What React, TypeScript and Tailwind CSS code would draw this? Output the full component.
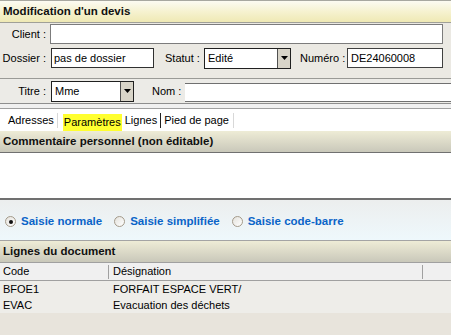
import React from "react";

function Header({ children, variant }: { children: React.ReactNode; variant: "yellow" | "gray" }) {
  const bg =
    variant === "yellow"
      ? "bg-linear-to-b from-[#fcfbf2] via-[#f6f2d0] to-[#efe9b4]"
      : "bg-linear-to-b from-[#eeecd6] via-[#dcdac8] to-[#c9c8ba]";
  return (
    <div className={`h-[21px] shrink-0 flex items-center px-[3px] font-bold text-[11.5px] text-[#101010] whitespace-nowrap ${bg}`}>
      {children}
    </div>
  );
}

function Select({ value, w }: { value: string; w: string }) {
  return (
    <div className={`${w} h-[21px] bg-white border border-[#202020] flex items-stretch`}>
      <div className="flex-1 flex items-center pl-[3px]">{value}</div>
      <div className="w-[13px] bg-[#d8d4c8] border-l border-[#505050] flex items-center justify-center">
        <svg width="7" height="4" viewBox="0 0 7 4">
          <path d="M0 0h7L3.5 4z" fill="#000" />
        </svg>
      </div>
    </div>
  );
}

function Radio({ checked }: { checked?: boolean }) {
  return (
    <div className="w-[11px] h-[11px] rounded-full border border-[#a49a8a] bg-linear-to-br from-[#e4e2dc] to-[#ffffff] flex items-center justify-center">
      {checked && <div className="w-[4px] h-[4px] rounded-full bg-[#101010]" />}
    </div>
  );
}

export default function App() {
  return (
    <div className="w-[451px] h-[335px] overflow-hidden bg-[#e8e4dc] text-[11px] text-black flex flex-col font-['Liberation_Sans',Arial,sans-serif] leading-none whitespace-nowrap">
      {/* Header */}
      <div className="border-t border-[#a8a8a0]" />
      <Header variant="yellow">Modification d'un devis</Header>
      <div className="border-t border-[#a0a098]" />

      {/* Section 1 */}
      <div className="h-[56px] shrink-0 bg-[#ebe9e3] border-b border-[#9a9a96] flex flex-col">
        <div className="flex items-center mt-[1px] h-[20px]">
          <div className="w-[47px] text-right pr-[1px]">Client :</div>
          <div className="ml-[3px] w-[393px] h-[20px] bg-white border border-[#7c7c7c]" />
        </div>
        <div className="flex items-center mt-[4px] h-[20px]">
          <div className="w-[47px] text-right pr-[1px]">Dossier :</div>
          <div className="ml-[4px] w-[103px] h-[20px] bg-white border border-[#303030] flex items-center pl-[2px]">pas de dossier</div>
          <div className="ml-[11px] w-[37px]">Statut :</div>
          <div className="ml-[2px]">
            <Select value="Edité" w="w-[87px]" />
          </div>
          <div className="ml-[9px] w-[46px]">Numéro :</div>
          <div className="ml-[1px] w-[96px] h-[20px] bg-white border border-[#404040] flex items-center pl-[3px]">DE24060008</div>
        </div>
      </div>

      {/* Section 2 */}
      <div className="h-[25px] shrink-0 bg-[#ecebe7] border-b border-[#8e8e8e] flex items-center">
        <div className="w-[47px] text-right pr-[1px]">Titre :</div>
        <div className="ml-[4px]">
          <Select value="Mme" w="w-[83px]" />
        </div>
        <div className="ml-[18px] w-[33px]">Nom :</div>
        <div className="flex-1 h-[19px] mt-[2px] bg-white border-t border-b border-[#707070]" />
      </div>
      <div className="h-[5px] shrink-0 bg-[#f0f0f0] border-b border-[#a0a0a0]" />

      {/* Tabs */}
      <div className="h-[22px] shrink-0 bg-white flex items-center">
        <div className="ml-[8px]">Adresses</div>
        <div className="ml-[3px] w-px h-[15px] bg-[#d8d8d8]" />
        <div className="ml-[5px] h-[17px] mt-[5px] px-[1px] bg-[#ffff30] flex items-center pb-[1px]">Paramètres</div>
        <div className="ml-[3px]">Lignes</div>
        <div className="ml-[3px] w-px h-[15px] bg-[#202020]" />
        <div className="ml-[3px]">Pied de page</div>
        <div className="ml-[4px] w-px h-[15px] bg-[#d8d8d8]" />
      </div>

      {/* Commentaire */}
      <Header variant="gray">Commentaire personnel (non éditable)</Header>
      <div className="h-[48px] shrink-0 bg-white border-t border-b-2 border-[#707070]" />

      {/* Radios */}
      <div className="h-[41px] shrink-0 pt-[3px] bg-linear-to-b from-[#eceeee] to-[#eef8fc] border-b border-[#a4a4a4] flex items-center font-bold text-[11.5px] text-[#0a64c8]">
        <div className="ml-[5px]"><Radio checked /></div>
        <div className="ml-[5px]">Saisie normale</div>
        <div className="ml-[12px]"><Radio /></div>
        <div className="ml-[5px]">Saisie simplifiée</div>
        <div className="ml-[12px]"><Radio /></div>
        <div className="ml-[5px]">Saisie code-barre</div>
      </div>

      {/* Lignes du document */}
      <Header variant="gray">Lignes du document</Header>
      <div className="border-t border-[#a0a0a0]" />
      <div className="h-[18px] shrink-0 bg-[#f0f0f0] border-b border-[#a0a0a0] flex items-center">
        <div className="w-[108px] pl-[3px]">Code</div>
        <div className="w-px h-[14px] bg-[#a0a0a0]" />
        <div className="w-[313px] pl-[4px]">Désignation</div>
        <div className="w-px h-[14px] bg-[#a0a0a0]" />
      </div>
      <div className="bg-[#eeede9] flex flex-col">
        <div className="h-[16px] flex items-center">
          <div className="w-[109px] pl-[3px]">BFOE1</div>
          <div className="pl-[4px]">FORFAIT ESPACE VERT/</div>
        </div>
        <div className="h-[16px] flex items-center">
          <div className="w-[109px] pl-[3px]">EVAC</div>
          <div className="pl-[4px]">Evacuation des déchets</div>
        </div>
      </div>
      <div className="flex-1 bg-[#e8e4dc]" />
    </div>
  );
}
